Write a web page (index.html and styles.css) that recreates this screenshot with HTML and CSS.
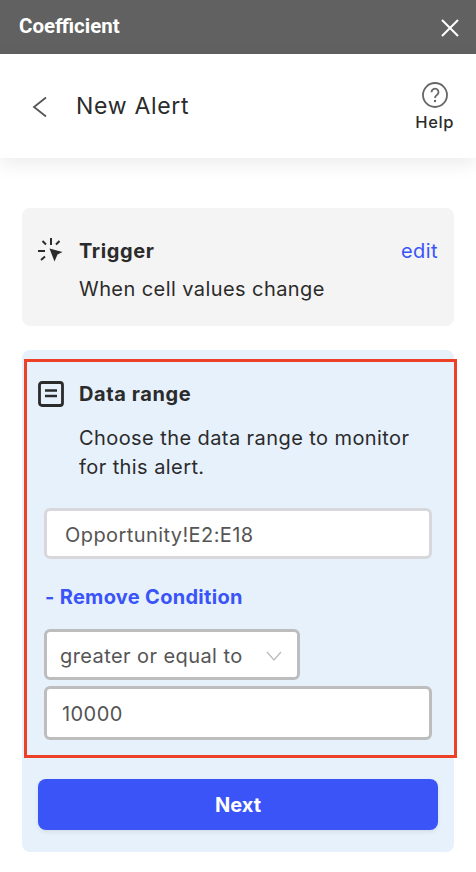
FILE: index.html
```html
<!DOCTYPE html>
<html lang="en">
<head>
  <meta charset="UTF-8" />
  <title>New Alert</title>
  <meta name="viewport" content="width=device-width, initial-scale=1.0" />
  <link rel="stylesheet" href="styles.css">
</head>
<body>
  <div class="titlebar">
    <span class="app-name">Coefficient</span>
    <svg class="close" width="18" height="18" viewBox="0 0 18 18"><path d="M1 1l16 16M17 1L1 17" stroke="#fff" stroke-width="2" fill="none"/></svg>
  </div>
  <header class="subhead">
    <svg class="back" width="16" height="22" viewBox="0 0 16 22"><path d="M14 2.500L2 12l12 9.500" stroke="#555" stroke-width="1.800" fill="none"/></svg>
    <h1>New Alert</h1>
    <div class="help">
      <svg width="28" height="28" viewBox="0 0 28 28">
        <circle cx="14" cy="14" r="12" stroke="#666" stroke-width="1.800" fill="none"/>
        <path d="M10.500 11.200a3.500 3.500 0 1 1 5.400 2.900c-1.200.8-1.900 1.400-1.900 2.900" stroke="#666" stroke-width="1.800" fill="none"/>
        <circle cx="14" cy="20" r="1.200" fill="#666"/>
      </svg>
      <span>Help</span>
    </div>
  </header>
  <main>
    <section class="card trigger">
      <div class="card-head">
        <svg class="icon" width="26" height="26" viewBox="0 0 26 26">
          <path d="M13 0v7M4.500 3l3.500 3.500M21.500 3L18 6.500M0 13h7M3 22l4-3.500" stroke="#2b2b2b" stroke-width="2" fill="none"/>
          <path d="M11.500 10.500l13 3.500-5 2.500-3 7z" fill="#2b2b2b"/>
        </svg>
        <h2>Trigger</h2>
        <a class="edit">edit</a>
      </div>
      <p>When cell values change</p>
    </section>
    <section class="card range">
      <div class="card-head">
        <svg class="icon" width="26" height="26" viewBox="0 0 26 26">
          <rect x="1.500" y="1.500" width="23" height="23" rx="2.500" stroke="#2b2b2b" stroke-width="2.800" fill="none"/>
          <path d="M7 9.500h12M7 15h12" stroke="#2b2b2b" stroke-width="2.600" fill="none"/>
        </svg>
        <h2>Data range</h2>
      </div>
      <p>Choose the data range to monitor<br>for this alert.</p>
      <div class="field field-range">Opportunity!E2:E18</div>
      <a class="remove">- Remove Condition</a>
      <div class="field field-select">
        greater or equal to
        <svg width="16" height="10" viewBox="0 0 16 10"><path d="M1 1l7 8 7-8" stroke="#bbb" stroke-width="1.200" fill="none"/></svg>
      </div>
      <div class="field field-value">10000</div>
      <button class="next">Next</button>
      <div class="highlight"></div>
    </section>
  </main>
</body>
</html>
```

FILE: styles.css
```css
:root {
  --text: #2b2b2b;
  --muted: #555;
  --accent: #3a54f8;
}
html, body {
  margin: 0;
  padding: 0;
  background: #fff;
}
body {
  font-family: "Inter", "Liberation Sans", sans-serif;
  color: var(--text);
}
.titlebar {
  height: 54px;
  background: #616161;
  color: #fff;
  display: flex;
  align-items: center;
  justify-content: space-between;
  padding: 0 17px 3px 19px;
  box-sizing: border-box;
}
.app-name {
  font-family: "Roboto", sans-serif;
  font-weight: 700;
  font-size: 20.5px;
}
.close {
  margin-top: 5px;
}
.subhead {
  height: 104px;
  display: flex;
  align-items: center;
  padding: 0 22px 0 32px;
  box-shadow: 0 6px 18px rgba(0, 0, 0, 0.08);
}
.back {
  margin-right: 28px;
}
h1 {
  font-size: 23px;
  font-weight: 400;
  letter-spacing: 0.7px;
  margin: 0;
  flex: 1;
}
.help {
  display: flex;
  flex-direction: column;
  align-items: center;
  font-size: 16.5px;
  letter-spacing: 0.6px;
  font-weight: 500;
  gap: 3px;
}
.help svg {
  display: block;
}
main {
  padding: 50px 22px 0;
}
.card {
  background: #f4f4f4;
  border-radius: 8px;
  box-sizing: border-box;
  font-size: 20px;
  letter-spacing: 0.42px;
}
.trigger {
  height: 118px;
  padding: 28px 16px 0;
  margin-bottom: 24px;
}
.range {
  height: 502px;
  background: #e6f1fc;
  padding: 29px 16px 0;
  position: relative;
  display: flex;
  flex-direction: column;
}
.card-head {
  display: flex;
  align-items: center;
  height: 30px;
}
.icon {
  margin-right: 15px;
  flex: none;
}
h2 {
  font-size: 20px;
  font-weight: 700;
  letter-spacing: 0.6px;
  margin: 0;
  flex: 1;
}
.edit {
  color: var(--accent);
  font-weight: 400;
}
.card p {
  margin: 9px 0 0 41px;
  line-height: 29px;
}
.range p {
  margin-top: 15px;
}
.field {
  background: #fff;
  box-sizing: border-box;
  border-radius: 6px;
  color: var(--muted);
  display: flex;
  align-items: center;
  margin-left: 6px;
  padding-top: 2px;
  border: 3px solid #bdbdbd;
}
.field-range {
  width: 388px;
  height: 51px;
  margin-top: 26px;
  padding-left: 18px;
  border-color: #d8d8dc;
}
.remove {
  color: var(--accent);
  font-weight: 700;
  letter-spacing: 0.3px;
  margin: 26px 0 0 7px;
  line-height: 25px;
}
.field-select {
  width: 256px;
  height: 51px;
  margin-top: 19px;
  padding-left: 13px;
  padding-right: 15px;
  justify-content: space-between;
}
.field-value {
  width: 388px;
  height: 54px;
  margin-top: 6px;
  padding-left: 15px;
}
.next {
  width: 400px;
  height: 51px;
  margin-top: 39px;
  border: none;
  border-radius: 8px;
  background: var(--accent);
  color: #fff;
  font: 700 20px "Inter", sans-serif;
  box-shadow: 0 2px 4px rgba(0, 0, 0, 0.08);
}
.highlight {
  position: absolute;
  left: 2px;
  top: 9px;
  width: 433px;
  height: 399px;
  box-sizing: border-box;
  border: 3px solid #ec4127;
}
```
